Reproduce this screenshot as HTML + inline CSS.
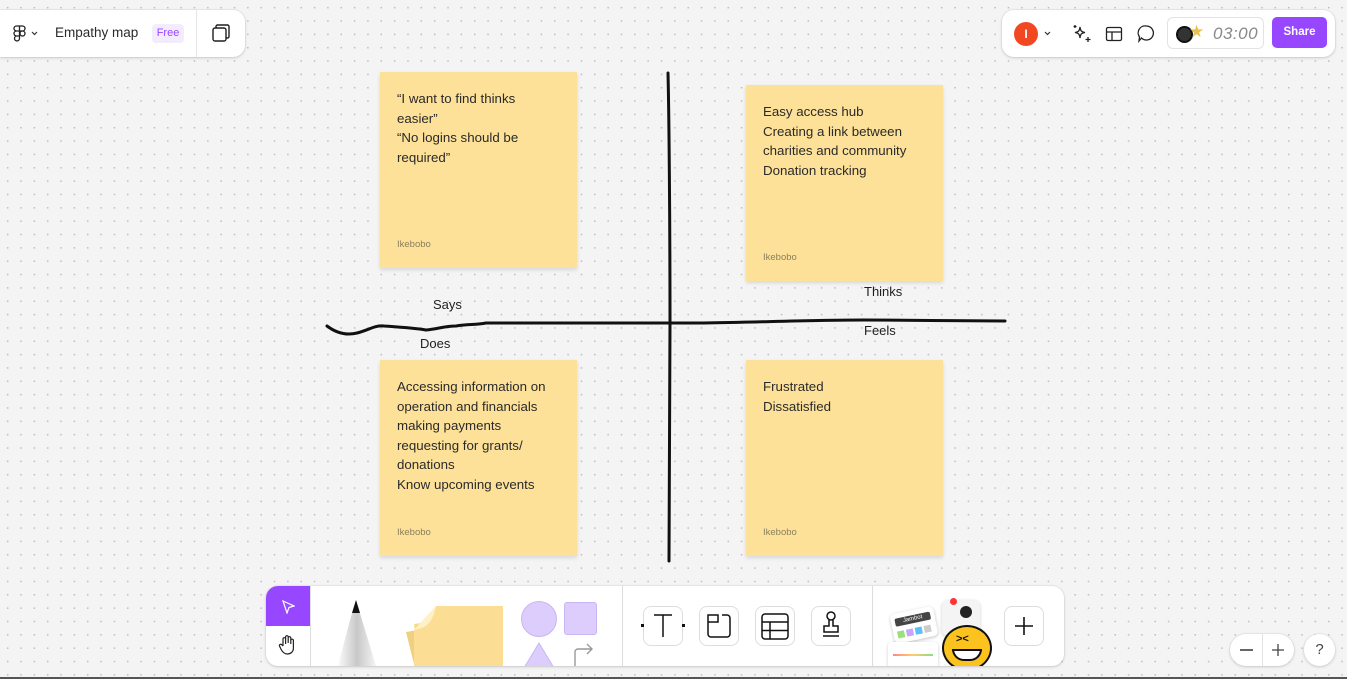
<!DOCTYPE html>
<html><head><meta charset="utf-8"><style>
*{box-sizing:border-box;margin:0;padding:0}
body{width:1347px;height:679px;overflow:hidden;position:relative;font-family:"Liberation Sans",sans-serif;background:#f4f4f4;
background-image:radial-gradient(circle,#bdbdbd 0.7px,transparent 1px);background-size:13.35px 13.35px;background-position:1px 1px}
.panel{position:absolute;background:#fff;border-radius:12px;box-shadow:0 1px 3px rgba(0,0,0,.15),0 0 0 1px rgba(0,0,0,.04)}
.note{position:absolute;width:197px;height:196px;background:#fde199;box-shadow:0 2px 4px rgba(0,0,0,.12);padding:17px 22px 17px 17px;font-size:13.3px;line-height:19.6px;color:#2a2a2a}
.note .a{position:absolute;left:17px;bottom:17px;font-size:9.5px;color:#8b7f5c;line-height:12px}
.lbl{position:absolute;font-size:13px;color:#1e1e1e}
.tb{position:absolute;width:40px;height:40px;border:1px solid #ddd;border-radius:8px;background:#fff}
</style></head><body>

<div class="panel" style="left:0;top:10px;width:245px;height:47px;border-radius:0 12px 12px 0">
 <svg style="position:absolute;left:13px;top:15px" width="13" height="18" viewBox="0 0 13 18" fill="none" stroke="#222" stroke-width="1.3"><path d="M3.5 1h3v5h-3a2.5 2.5 0 010-5zM6.5 1h3a2.5 2.5 0 010 5h-3zM3.5 6h3v5h-3a2.5 2.5 0 010-5zM9.5 6a2.5 2.5 0 110 5 2.5 2.5 0 010-5zM3.5 11h3v2.5a2.5 2.5 0 11-3-2.5z"/></svg>
 <svg style="position:absolute;left:31px;top:21px" width="7" height="5"><path d="M1 1l2.5 2.5L6 1" stroke="#333" fill="none" stroke-width="1.2"/></svg>
 <div style="position:absolute;left:55px;top:15px;font-size:13.5px;color:#2a2a2a">Empathy map</div>
 <div style="position:absolute;left:152px;top:14px;width:32px;height:19px;background:#f3ecfe;border-radius:4px;color:#9747ff;font-size:11px;text-align:center;line-height:19px">Free</div>
 <div style="position:absolute;left:196px;top:0;width:1px;height:47px;background:#e6e6e6"></div>
 <svg style="position:absolute;left:211px;top:13px" width="20" height="20" fill="none" stroke="#1e1e1e" stroke-width="1.4"><rect x="2" y="5" width="13" height="13" rx="2"/><path d="M5 5V3.5A1.5 1.5 0 016.5 2H16.5A1.5 1.5 0 0118 3.5V13.5A1.5 1.5 0 0116.5 15H15"/></svg>
</div>

<div class="panel" style="left:1002px;top:10px;width:333px;height:47px">
 <div style="position:absolute;left:12px;top:12px;width:24px;height:24px;border-radius:50%;background:#f24822;color:#fff;font-size:12px;text-align:center;line-height:24px;font-weight:bold">I</div>
 <svg style="position:absolute;left:42px;top:21px" width="7" height="5"><path d="M1 1l2.5 2.5L6 1" stroke="#333" fill="none" stroke-width="1.2"/></svg>
 <svg style="position:absolute;left:70px;top:14px" width="20" height="20" fill="none" stroke="#222" stroke-width="1.3"><path d="M8 3c.5 4 1.5 5 5 5.5-3.5.5-4.5 1.5-5 5.5-.5-4-1.5-5-5-5.5 3.5-.5 4.5-1.5 5-5.5z"/><path d="M16 13v5M13.5 15.5h5M3 1v3M1.5 2.5h3"/></svg>
 <svg style="position:absolute;left:103px;top:15px" width="18" height="18" fill="none" stroke="#222" stroke-width="1.3"><rect x="1.5" y="2.5" width="15" height="13" rx="1.5"/><path d="M1.5 7h15M7 7v8.5"/></svg>
 <svg style="position:absolute;left:135px;top:14px" width="19" height="19" fill="none" stroke="#222" stroke-width="1.3"><path d="M9.5 2a7 7 0 11-5 12L2 17l.5-4A7 7 0 019.5 2z"/></svg>
 <div style="position:absolute;left:165px;top:7px;width:97px;height:32px;border:1px solid #e3e3e3;border-radius:6px">
  <div style="position:absolute;left:8px;top:8px;width:17px;height:17px;border-radius:50%;background:#333;border:2px solid #111"></div>
  <div style="position:absolute;left:21px;top:4px;font-size:17px;color:#e8c24a">★</div>
  <div style="position:absolute;left:45px;top:6px;font-size:17px;color:#888;font-style:italic;letter-spacing:.5px">03:00</div>
 </div>
 <div style="position:absolute;left:270px;top:7px;width:55px;height:31px;background:#9747ff;border-radius:5px;color:#fff;font-size:11.5px;font-weight:bold;text-align:center;line-height:31px">Share</div>
</div>

<div class="note" style="left:380px;top:72px">“I want to find thinks easier”<br>“No logins should be required”<div class="a">Ikebobo</div></div>
<div class="note" style="left:746px;top:85px">Easy access hub<br>Creating a link between charities and community<br>Donation tracking<div class="a">Ikebobo</div></div>
<div class="note" style="left:380px;top:360px">Accessing information on operation and financials making payments requesting for grants/ donations<br>Know upcoming events<div class="a">Ikebobo</div></div>
<div class="note" style="left:746px;top:360px">Frustrated<br>Dissatisfied<div class="a">Ikebobo</div></div>

<svg style="position:absolute;left:0;top:0" width="1347" height="679" fill="none" stroke="#111" stroke-width="3" stroke-linecap="round">
 <path d="M668 73c1 40 2 150 2 250s-1 170-1 238"/>
 <path d="M327 326c8 6 18 10 30 7 12-3 18-8 27-7 14 1 30 2 42 4 12-1 18-4 30-4 12-2 20-1 30-3h48c60 0 130 0 170 0 60-1 110-3 160-3s90 1 141 1"/>
</svg>
<div class="lbl" style="left:433px;top:297px">Says</div>
<div class="lbl" style="left:420px;top:336px">Does</div>
<div class="lbl" style="left:864px;top:284px">Thinks</div>
<div class="lbl" style="left:864px;top:323px">Feels</div>

<div class="panel" style="left:266px;top:586px;width:798px;height:80px;border-radius:12px;overflow:hidden">
 <div style="position:absolute;left:0;top:0;width:44px;height:40px;background:#9747ff"></div>
 <svg style="position:absolute;left:15px;top:14px" width="14" height="14" fill="none" stroke="#fff" stroke-width="1.2"><path d="M2 1l11 5-5 1.5L6 13z"/></svg>
 <svg style="position:absolute;left:12px;top:48px" width="20" height="22" fill="none" stroke="#222" stroke-width="1.2"><path d="M5 12V5a1.3 1.3 0 012.6 0v5M7.6 9V3a1.3 1.3 0 012.6 0v6M10.2 9V4a1.3 1.3 0 012.6 0v6M12.8 10V6.5a1.3 1.3 0 012.6 0V14c0 4-3 6-6 6s-5-2-6.5-5L1.5 12a1.3 1.3 0 012-1.5L5 12"/></svg>
 <div style="position:absolute;left:44px;top:0;width:1px;height:80px;background:#ddd"></div>
 <svg style="position:absolute;left:70px;top:14px" width="46" height="66"><defs><linearGradient id="p" x1="0" x2="1"><stop offset="0" stop-color="#fafafa"/><stop offset=".5" stop-color="#c8c8c8"/><stop offset="1" stop-color="#f4f4f4"/></linearGradient></defs><path d="M14 20L20 0 26 20 40 66H2z" fill="url(#p)"/><path d="M16 13L20 0 24 13z" fill="#111"/></svg>
 <svg style="position:absolute;left:130px;top:16px" width="110" height="64"><path d="M10 30l60-10 10 50H20z" fill="#f0cf80"/><path d="M18 22l60-8 5 56H25z" fill="#f6d98e"/><path d="M40 4h67v70H18V28z" fill="#fbdd94"/><path d="M40 4L18 28c10-2 18-4 22-24z" fill="#fff1c4"/></svg>
 <div style="position:absolute;left:255px;top:15px;width:36px;height:36px;border-radius:50%;background:#dccdfd;border:1px solid #c8b6f5"></div>
 <div style="position:absolute;left:298px;top:16px;width:33px;height:33px;border-radius:3px;background:#dccdfd;border:1px solid #c8b6f5"></div>
 <svg style="position:absolute;left:256px;top:56px" width="34" height="24"><path d="M17 1L32 26H2z" fill="#dccdfd" stroke="#c8b6f5"/></svg>
 <svg style="position:absolute;left:305px;top:56px" width="26" height="24" fill="none" stroke="#999" stroke-width="1.4"><path d="M4 24V10a3 3 0 013-3h14M16 2l5 5-5 5"/></svg>
 <div style="position:absolute;left:356px;top:0;width:1px;height:80px;background:#ddd"></div>
 <div class="tb" style="left:377px;top:20px"></div>
 <svg style="position:absolute;left:374px;top:26px" width="48" height="28" fill="none" stroke="#111" stroke-width="1.5"><path d="M14 3h18M23 3v22"/><rect x="1" y="12" width="3" height="3" fill="#111" stroke="none"/><rect x="42" y="12" width="3" height="3" fill="#111" stroke="none"/></svg>
 <div class="tb" style="left:433px;top:20px"></div>
 <svg style="position:absolute;left:438px;top:25px" width="30" height="30" fill="none" stroke="#111" stroke-width="1.5"><path d="M4 4h10v7H4zM18 4h5a3 3 0 013 3v16a3 3 0 01-3 3H7a3 3 0 01-3-3V11"/></svg>
 <div class="tb" style="left:489px;top:20px"></div>
 <svg style="position:absolute;left:494px;top:25px" width="30" height="30" fill="none" stroke="#111" stroke-width="1.5"><rect x="2" y="3" width="26" height="25" rx="3"/><path d="M2 11h26M2 19.5h26M10 11v17"/></svg>
 <div class="tb" style="left:545px;top:20px"></div>
 <svg style="position:absolute;left:553px;top:24px" width="24" height="32" fill="none" stroke="#111" stroke-width="1.5"><circle cx="12" cy="6" r="4"/><path d="M10 10v6H5v6h14v-6h-5v-6M4 26h16"/></svg>
 <div style="position:absolute;left:606px;top:0;width:1px;height:80px;background:#ddd"></div>
 <div style="position:absolute;left:626px;top:24px;width:44px;height:30px;background:#fff;border-radius:5px;box-shadow:0 1px 3px rgba(0,0,0,.25);transform:rotate(-12deg)"><div style="margin:5px 4px;height:8px;background:#444;border-radius:2px;font-size:6px;color:#fff;text-align:center;line-height:8px">Jambot</div><div style="margin:0 4px;display:flex;gap:2px"><span style="width:7px;height:7px;background:#9ae07b"></span><span style="width:7px;height:7px;background:#c8a5f8"></span><span style="width:7px;height:7px;background:#5bc0f7"></span><span style="width:7px;height:7px;background:#ccc"></span></div></div>
 <div style="position:absolute;left:622px;top:56px;width:50px;height:26px;background:#fff;border-radius:4px;box-shadow:0 1px 3px rgba(0,0,0,.2)"><div style="margin:12px 5px 0;height:2px;background:linear-gradient(90deg,#f88,#fc6,#8d8)"></div></div>
 <div style="position:absolute;left:676px;top:14px;width:38px;height:36px;background:#f4f4f4;border-radius:6px;box-shadow:0 1px 3px rgba(0,0,0,.2)"><div style="position:absolute;left:8px;top:-2px;width:7px;height:7px;border-radius:50%;background:#f33"></div><div style="position:absolute;left:18px;top:6px;width:12px;height:12px;border-radius:50%;background:#222"></div></div>
 <div style="position:absolute;left:676px;top:39px;width:50px;height:46px;border-radius:50%;background:#fcc31e;border:2px solid #111"><div style="position:absolute;left:8px;top:22px;width:30px;height:12px;background:#fff;border:2px solid #111;border-radius:0 0 15px 15px"></div><div style="position:absolute;left:12px;top:6px;font-size:11px;font-weight:bold;color:#111">&gt;&lt;</div></div>
 <div class="tb" style="left:738px;top:20px"></div>
 <svg style="position:absolute;left:748px;top:30px" width="20" height="20" stroke="#111" stroke-width="1.6"><path d="M10 1v18M1 10h18"/></svg>
</div>

<div class="panel" style="left:1230px;top:634px;width:64px;height:32px;border-radius:16px">
 <div style="position:absolute;left:32px;top:0;width:1px;height:32px;background:#e3e3e3"></div>
 <div style="position:absolute;left:10px;top:15px;width:13px;height:1.5px;background:#666"></div>
 <svg style="position:absolute;left:41px;top:9px" width="14" height="14" stroke="#444" stroke-width="1.3"><path d="M7 1v12M1 7h12"/></svg>
</div>
<div class="panel" style="left:1304px;top:634px;width:31px;height:32px;border-radius:16px;text-align:center;line-height:32px;font-size:15px;color:#444">?</div>
<div style="position:absolute;left:0;top:677px;width:1347px;height:2px;background:#555"></div>
</body></html>
